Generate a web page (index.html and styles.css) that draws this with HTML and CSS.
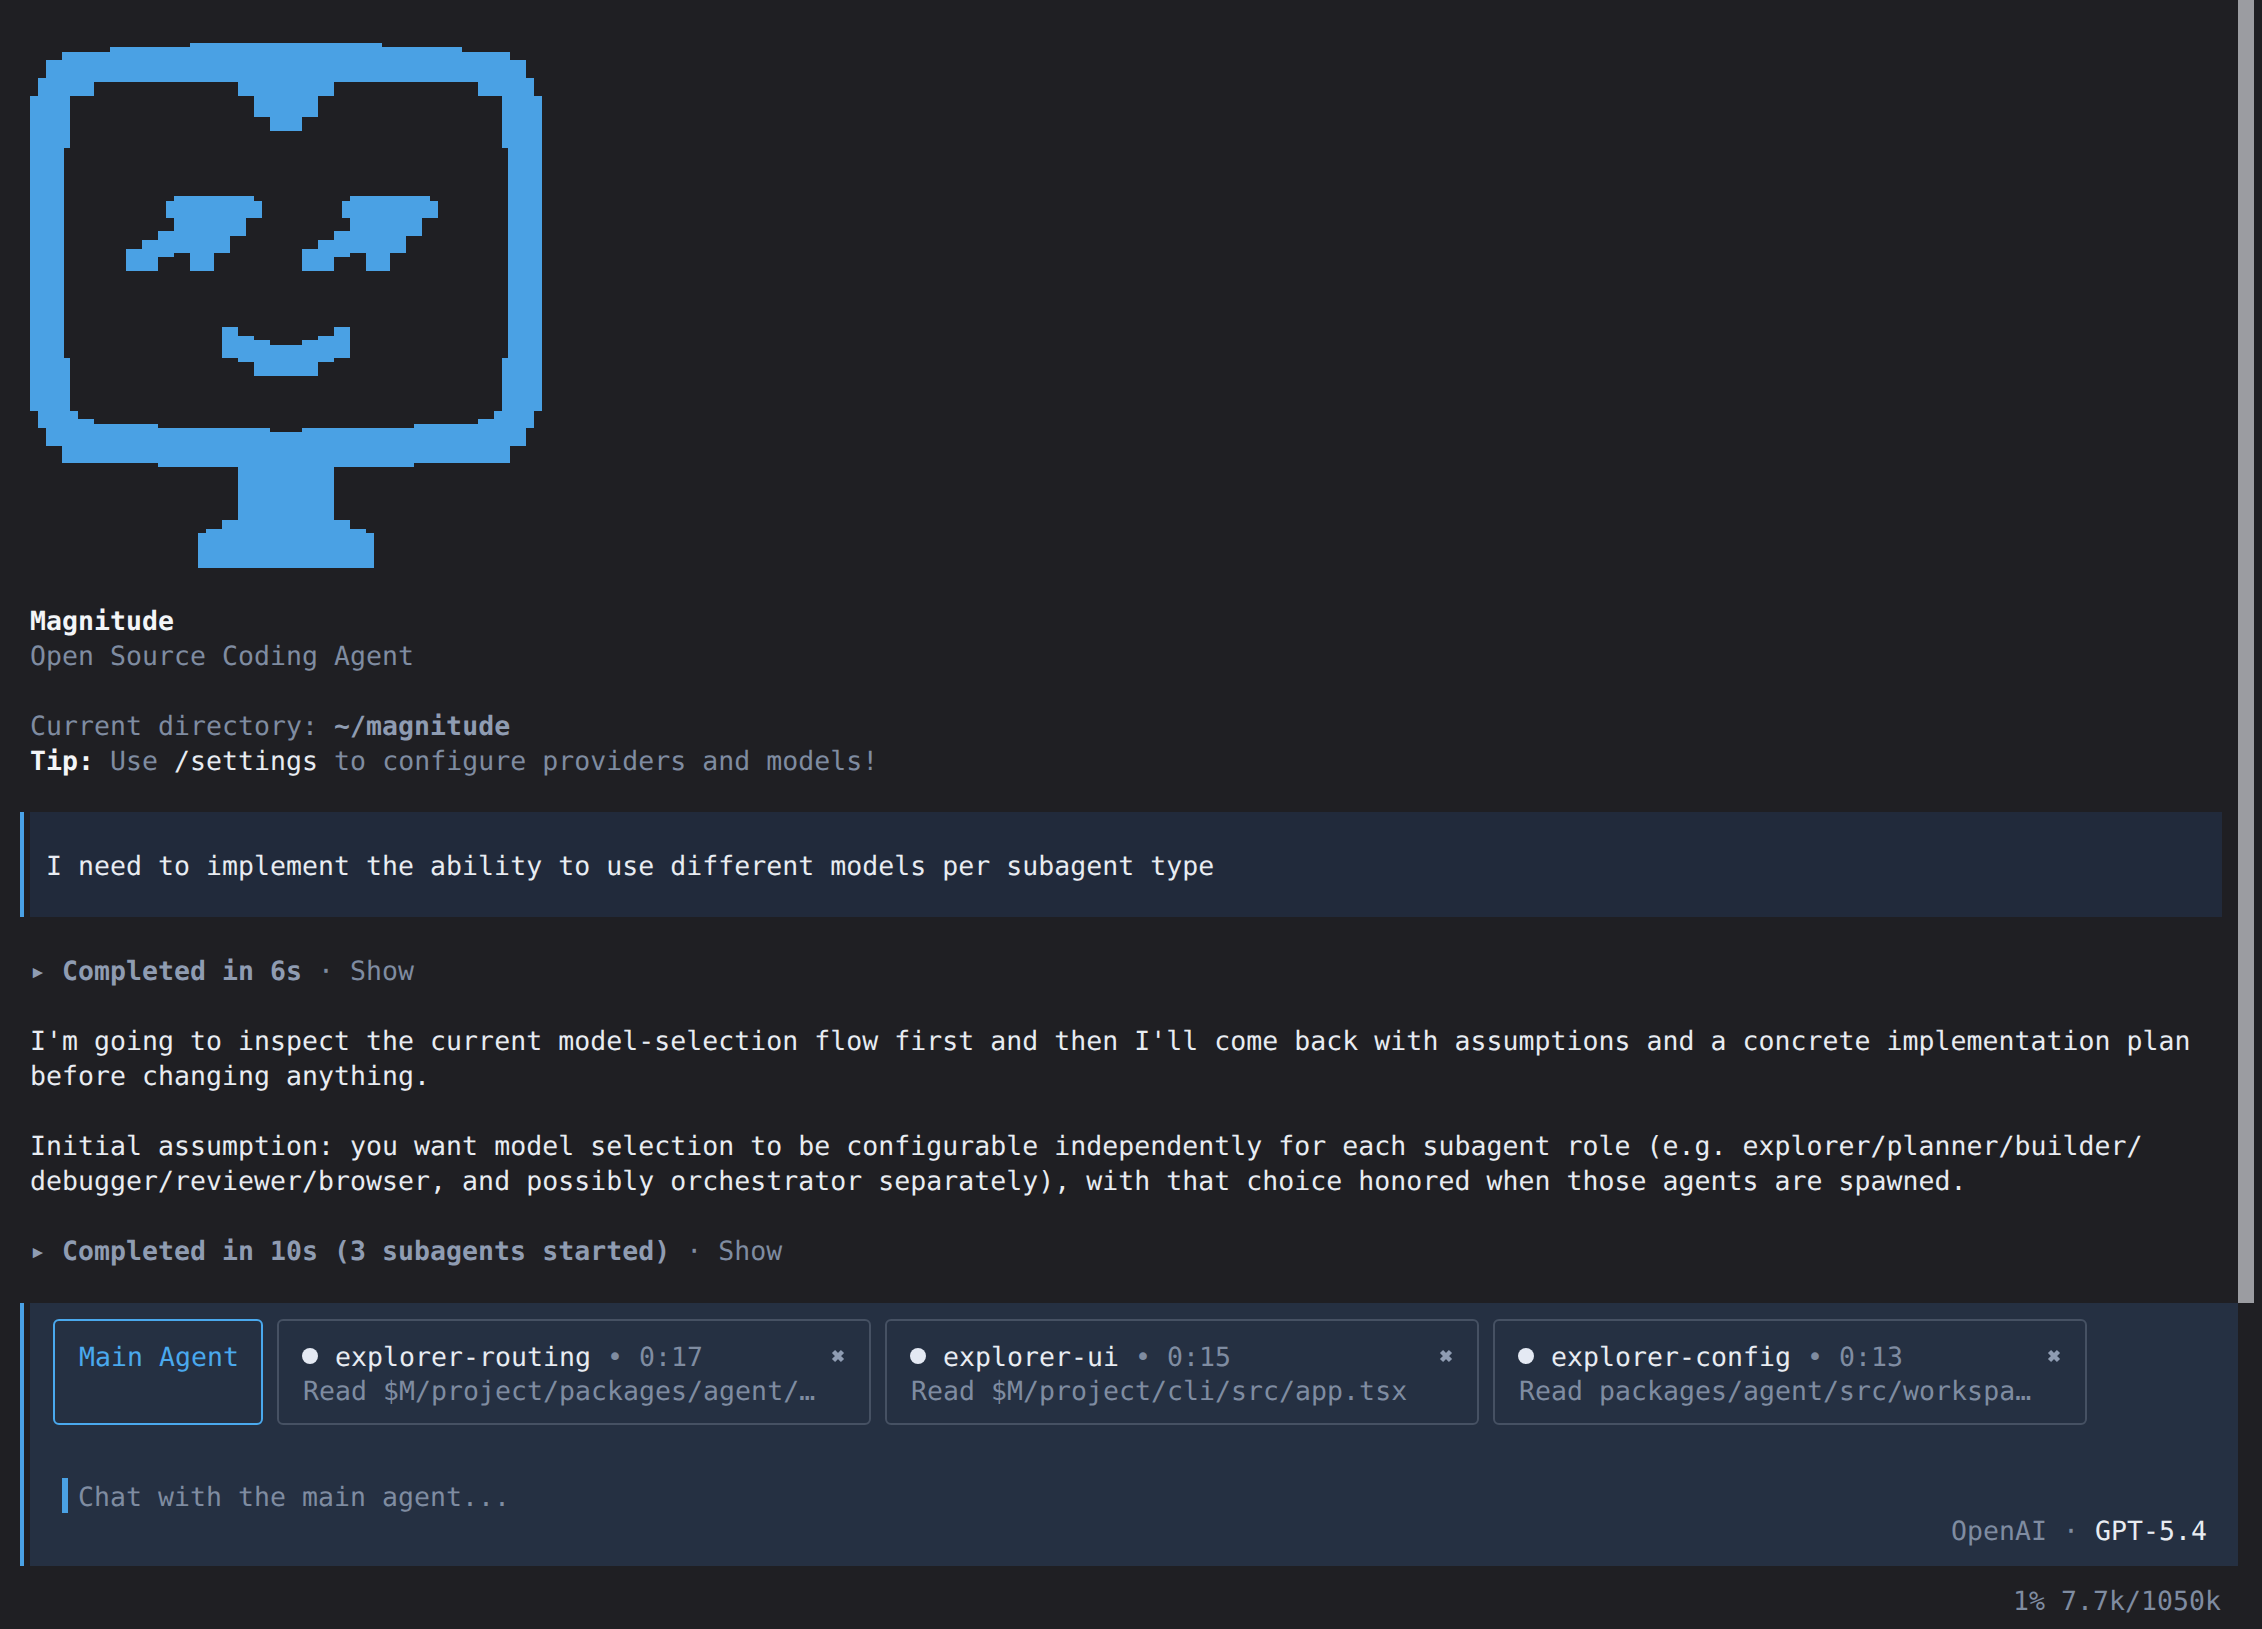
FILE: index.html
```html
<!DOCTYPE html>
<html lang="en">
<head>
<meta charset="utf-8">
<title>Magnitude</title>
<link rel="stylesheet" href="styles.css">
</head>
<body>
<div class="app">
  <main class="transcript">
    <svg class="logo" viewBox="0 0 572 568" width="572" height="568" aria-hidden="true">
      <path fill-rule="evenodd" d="M30 96H38V78H46V60H62V52H110V47H190V43H382V47H462V52H510V60H526V78H534V96H542V411H534V428H526V446H510V463H414V467H334V520H350V529H366V533H374V568H198V533H206V529H222V520H238V467H158V463H62V446H46V428H38V411H30Z
      M94 82H238V96H254V117H270V131H302V117H318V96H334V82H478V96H502V148H508V358H502V411H494V419H478V424H414V428H302V432H270V428H158V424H94V419H78V411H70V358H64V148H70V96H94Z"/>
      <path d="M174 196H254V201H262V218H246V236H230V253H214V271H190V253H174V257H158V271H126V249H142V240H158V231H174V218H166V201H174Z"/>
      <path d="M350 196H430V201H438V218H422V236H406V253H390V271H366V253H350V257H334V271H302V249H318V240H334V231H350V218H342V201H350Z"/>
      <path d="M222 327H238V336H254V340H270V345H302V340H318V336H334V327H350V358H334V362H318V376H254V362H238V358H222Z"/>
    </svg>

    <section class="intro">
      <div class="line strong">Magnitude</div>
      <div class="line muted">Open Source Coding Agent</div>
      <div class="line">&nbsp;</div>
      <div class="line muted">Current directory: <b class="soft">~/magnitude</b></div>
      <div class="line muted"><b class="bright">Tip:</b> Use <span class="bright">/settings</span> to configure providers and models!</div>
    </section>

    <div class="user-row">
      <div class="user-box">I need to implement the ability to use different models per subagent type</div>
    </div>

    <div class="line status-row"><span class="caret">▸</span><b class="soft">Completed in 6s</b><span class="muted"> · Show</span></div>

    <section class="reply">
      <div class="line bright">I'm going to inspect the current model-selection flow first and then I'll come back with assumptions and a concrete implementation plan</div>
      <div class="line bright">before changing anything.</div>
      <div class="line">&nbsp;</div>
      <div class="line bright">Initial assumption: you want model selection to be configurable independently for each subagent role (e.g. explorer/planner/builder/</div>
      <div class="line bright">debugger/reviewer/browser, and possibly orchestrator separately), with that choice honored when those agents are spawned.</div>
    </section>

    <div class="line status-row"><span class="caret">▸</span><b class="soft">Completed in 10s (3 subagents started)</b><span class="muted"> · Show</span></div>
  </main>

  <section class="composer">
    <div class="tabs">
      <div class="tab tab-main">Main Agent</div>
      <div class="tab tab-sub">
        <div class="tab-head">
          <span class="dot"></span><span class="bright">explorer-routing</span><span class="muted"> • 0:17</span>
          <svg class="close" viewBox="0 0 14 14" width="14" height="14" aria-hidden="true"><path d="M2.5 2.5 11.5 11.5M11.5 2.5 2.5 11.5"/></svg>
        </div>
        <div class="line muted">Read $M/project/packages/agent/…</div>
      </div>
      <div class="tab tab-sub">
        <div class="tab-head">
          <span class="dot"></span><span class="bright">explorer-ui</span><span class="muted"> • 0:15</span>
          <svg class="close" viewBox="0 0 14 14" width="14" height="14" aria-hidden="true"><path d="M2.5 2.5 11.5 11.5M11.5 2.5 2.5 11.5"/></svg>
        </div>
        <div class="line muted">Read $M/project/cli/src/app.tsx</div>
      </div>
      <div class="tab tab-sub">
        <div class="tab-head">
          <span class="dot"></span><span class="bright">explorer-config</span><span class="muted"> • 0:13</span>
          <svg class="close" viewBox="0 0 14 14" width="14" height="14" aria-hidden="true"><path d="M2.5 2.5 11.5 11.5M11.5 2.5 2.5 11.5"/></svg>
        </div>
        <div class="line muted">Read packages/agent/src/workspa…</div>
      </div>
    </div>
    <div class="prompt"><span class="cursor"></span><span class="muted">Chat with the main agent...</span></div>
    <div class="model"><span class="muted">OpenAI · </span><span class="bright">GPT-5.4</span></div>
  </section>

  <footer class="usage muted">1% 7.7k/1050k</footer>
  <div class="scrollbar"></div>
</div>
</body>
</html>
```

FILE: styles.css
```css
* { box-sizing: border-box; }
html, body { margin: 0; height: 100%; background: #1f1f23; }
body { overflow: hidden; }
.app {
  position: relative;
  height: 1629px;
  display: flex;
  flex-direction: column;
  background: #1f1f23;
  color: #e8ecf2;
  font-family: "DejaVu Sans Mono", "Liberation Mono", monospace;
  font-size: 26.5px;
  line-height: 39px;
  letter-spacing: 0.05px;
  text-rendering: geometricPrecision;
}
.transcript { height: 1303px; flex: none; }
.logo { display: block; fill: #4aa1e4; margin-bottom: 34px; }
.intro, .reply { padding-left: 30px; }
.line, .muted, .bright, .soft, .user-box, .tab-main { white-space: pre; }
.line { height: 35px; }
.strong { color: #f3f5f8; font-weight: 700; }
.muted { color: #7f8ca1; font-weight: 400; }
.soft { color: #8f9cb2; font-weight: 700; }
.bright { color: #e8ecf2; }
b.bright { font-weight: 700; color: #f3f5f8; }

.user-row {
  margin: 35px 0 35px 20px;
  border-left: 4px solid #4aa1e4;
  padding-left: 6px;
  height: 105px;
}
.user-box {
  height: 105px;
  width: 2192px;
  background: #212a3b;
  padding: 35px 16px 0;
}
.status-row { display: flex; padding-left: 30px; margin-bottom: 35px; }
.status-row:last-child { margin-bottom: 0; }
.caret { width: 32px; color: #8f9cb2; }
.reply + .status-row { margin-top: 35px; }

.composer {
  flex: none;
  margin-left: 20px;
  width: 2218px;
  height: 263px;
  border-left: 4px solid #4aa1e4;
  box-shadow: inset 6px 0 0 #1f1f23;
  background: #253042;
  padding: 16px 0 0 29px;
}
.tabs { display: flex; gap: 14px; }
.tab {
  height: 106px;
  border: 2px solid #465163;
  border-radius: 6px;
  padding: 17px 24px;
}
.tab-main { width: 210px; border-color: #4aa9ee; color: #4aa9ee; }
.tab-sub { width: 594px; }
.tab-head { display: flex; align-items: flex-start; height: 34px; }
.dot {
  width: 16px;
  height: 16px;
  margin: 10px 17px 0 -1px;
  border-radius: 50%;
  background: #e4e9f3;
}
.close { margin: 11px 0 0 auto; fill: none; stroke: #8f9cb2; stroke-width: 4.5; }
.prompt { display: flex; align-items: flex-start; height: 34px; margin-top: 53px; padding-left: 9px; }
.cursor { width: 6px; height: 35px; background: #4aa1e4; margin-right: 10px; }
.model { height: 35px; text-align: right; padding-right: 31px; }
.usage { text-align: right; padding: 16px 41px 0 0; }
.scrollbar {
  position: absolute;
  top: 0;
  left: 2238px;
  width: 16px;
  height: 1303px;
  background: #9b9ca1;
}
```
